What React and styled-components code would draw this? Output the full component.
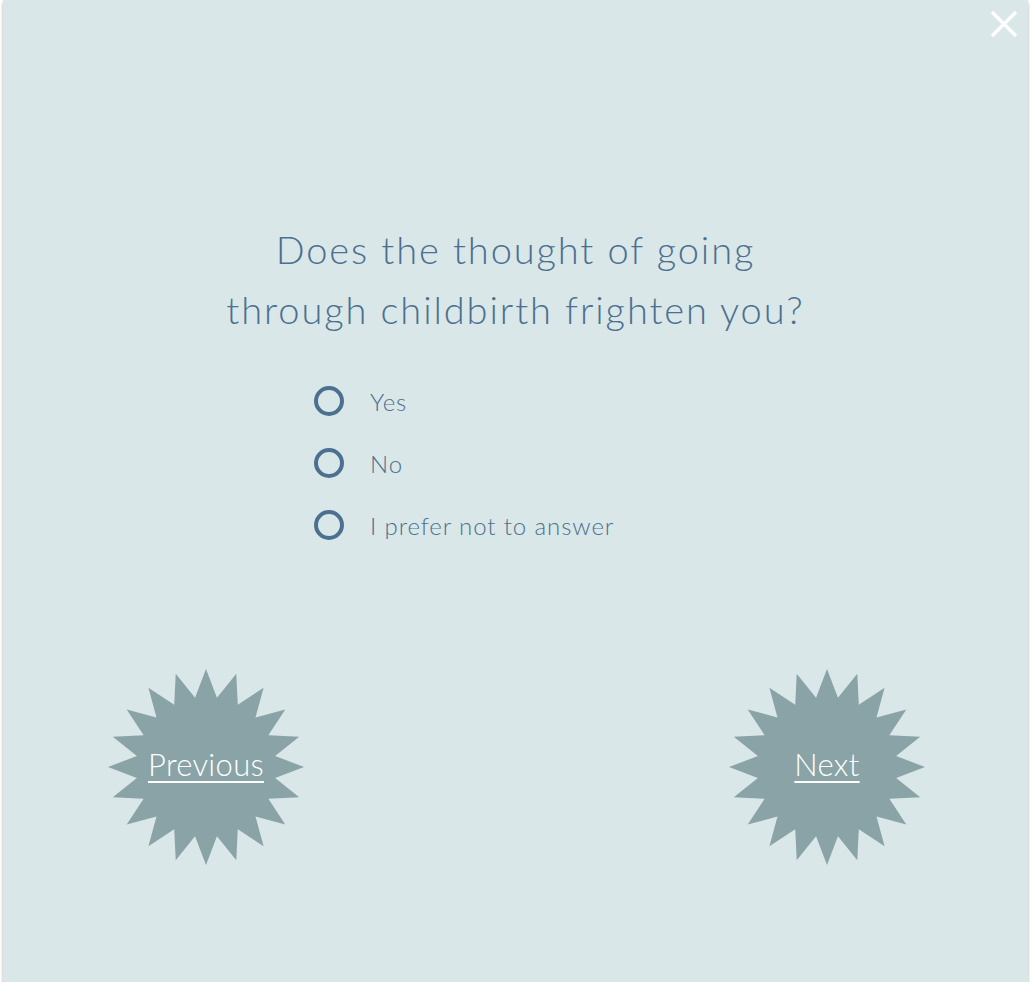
import React, { useState } from 'react';
import styled, { createGlobalStyle } from 'styled-components';

const GlobalStyle = createGlobalStyle`
    html, body {
        margin: 0;
        padding: 0;
        background: #ffffff;
    }
    * {
        box-sizing: border-box;
    }
`;

const Panel = styled.div`
    position: relative;
    width: 1025px;
    height: 982px;
    margin-left: 3px;
    background-color: #dae7e8;
    box-shadow: 0 3px 3px rgba(0, 0, 0, 0.28), 0 0 1px rgba(0, 0, 0, 0.15);
    font-family: Lato, "Open Sans", sans-serif;
    display: flex;
    flex-direction: column;
    align-items: center;
    padding-top: 219px;
`;

const CloseButton = styled.button`
    position: absolute;
    top: 9px;
    right: 9px;
    width: 30px;
    height: 30px;
    padding: 0;
    border: none;
    background: transparent;
    cursor: pointer;
`;

const Question = styled.h1`
    margin: 0;
    font-size: 38px;
    font-weight: 300;
    line-height: 60px;
    color: #4b7090;
    text-align: center;
    letter-spacing: 1.9px;
`;

const Options = styled.div`
    align-self: flex-start;
    margin-left: 311px;
    margin-top: 47px;
    display: flex;
    flex-direction: column;
    gap: 32px;
`;

const Option = styled.label`
    display: flex;
    align-items: center;
    gap: 26px;
    font-size: 24px;
    font-weight: 300;
    letter-spacing: 0.9px;
    color: #4b7090;
    cursor: pointer;
`;

const Radio = styled.span`
    flex: none;
    width: 30px;
    height: 30px;
    border-radius: 50%;
    border: 4px solid #4b7090;
    background: ${p => (p.$checked ? '#4b7090' : 'transparent')};
    box-shadow: ${p => (p.$checked ? 'inset 0 0 0 4px #dae7e8' : 'none')};
`;

const NavRow = styled.div`
    align-self: stretch;
    margin-top: 129px;
    padding: 0 103px 0 105px;
    display: flex;
    justify-content: space-between;
`;

const StarButton = styled.a`
    position: relative;
    width: 196px;
    height: 196px;
    display: flex;
    align-items: center;
    justify-content: center;
    padding-bottom: 6px;
    color: #ffffff;
    font-size: 31px;
    font-weight: 300;
    letter-spacing: 0.3px;
    text-decoration: underline;
    text-decoration-thickness: 2px;
    text-underline-offset: 5px;
    cursor: pointer;

    svg {
        position: absolute;
        inset: 0;
    }
    span {
        position: relative;
    }
`;

const starPoints = (() => {
    const pts = [];
    const cx = 98, cy = 98, outer = 98, inner = 70;
    for (let i = 0; i < 40; i++) {
        const r = i % 2 === 0 ? outer : inner;
        const a = (Math.PI / 20) * i - Math.PI / 2;
        pts.push(`${(cx + r * Math.cos(a)).toFixed(2)},${(cy + r * Math.sin(a)).toFixed(2)}`);
    }
    return pts.join(' ');
})();

const Star = ({ label }) => (
    <StarButton>
        <svg width="196" height="196" viewBox="0 0 196 196">
            <polygon points={starPoints} fill="#8aa3a7" />
        </svg>
        <span>{label}</span>
    </StarButton>
);

const answers = ['Yes', 'No', 'I prefer not to answer'];

export default function App() {
    const [selected, setSelected] = useState(null);

    return (
        <>
            <GlobalStyle />
            <Panel>
                <CloseButton aria-label="Close">
                    <svg width="30" height="30" viewBox="0 0 30 30">
                        <path d="M3 3 L27 27 M27 3 L3 27" stroke="#ffffff" strokeWidth="3.2" />
                    </svg>
                </CloseButton>
                <Question>
                    Does the thought of going
                    <br />
                    through childbirth frighten you?
                </Question>
                <Options>
                    {answers.map(a => (
                        <Option key={a} onClick={() => setSelected(a)}>
                            <Radio $checked={selected === a} />
                            {a}
                        </Option>
                    ))}
                </Options>
                <NavRow>
                    <Star label="Previous" />
                    <Star label="Next" />
                </NavRow>
            </Panel>
        </>
    );
}
